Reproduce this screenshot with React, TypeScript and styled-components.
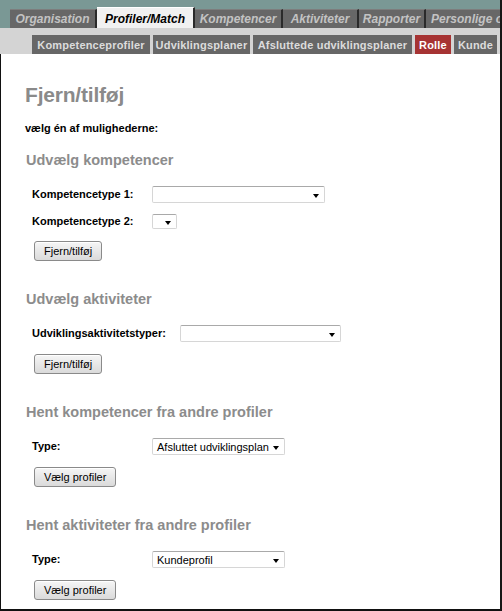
import React from "react";
import styled, { createGlobalStyle } from "styled-components";

const GlobalStyle = createGlobalStyle`
  html, body { margin: 0; padding: 0; background: #ffffff; }
  body { font-family: "Liberation Sans", Arial, sans-serif; }
  * { box-sizing: border-box; }
`;

const Page = styled.div`
  width: 502px;
  height: 611px;
  display: flex;
  flex-direction: column;
  overflow: hidden;
  border-right: 2px solid #161616;
  background: #ffffff;
  font-family: "Liberation Sans", Arial, sans-serif;
`;

const TopNav = styled.nav`
  display: flex;
  align-items: flex-end;
  height: 28px;
  padding-left: 10px;
  background: #7a9895;
  flex-shrink: 0;
`;

const MainTab = styled.div<{ $w: number; $active?: boolean }>`
  flex: 0 0 ${(p) => p.$w}px;
  height: ${(p) => (p.$active ? 21 : 19)}px;
  display: flex;
  align-items: center;
  justify-content: center;
  white-space: nowrap;
  overflow: hidden;
  background: ${(p) => (p.$active ? "#f1f1f1" : "#676767")};
  color: ${(p) => (p.$active ? "#000000" : "#c3c3c3")};
  border-right: 2px solid #2a2a2a;
  border-top: 1px solid ${(p) => (p.$active ? "#ffffff" : "#7d7d7d")};
  font-size: 12px;
  font-weight: bold;
  font-style: italic;
  padding-top: ${(p) => (p.$active ? 1 : 0)}px;
`;

const EdgeTab = styled(MainTab)`
  justify-content: flex-start;
  padding-left: 5px;
  border-right: none;
`;

const SubNav = styled.nav`
  display: flex;
  align-items: flex-end;
  height: 26px;
  padding-left: 32px;
  gap: 3px;
  background: #d4d4d4;
  flex-shrink: 0;
`;

const SubTab = styled.div<{ $w: number; $active?: boolean }>`
  flex: 0 0 ${(p) => p.$w}px;
  height: 19px;
  display: flex;
  align-items: center;
  justify-content: center;
  white-space: nowrap;
  background: ${(p) => (p.$active ? "#a63333" : "#676767")};
  color: ${(p) => (p.$active ? "#ffffff" : "#dcdcdc")};
  font-size: 11px;
  font-weight: bold;
  letter-spacing: 0.2px;
`;

const Content = styled.main`
  flex: 1;
  border-left: 1px solid #111111;
  border-bottom: 2px solid #111111;
  padding: 29px 0 0 24px;
  display: flex;
  flex-direction: column;
`;

const Title = styled.h1`
  margin: 0;
  font-size: 21px;
  line-height: 24px;
  font-weight: bold;
  color: #8a8a8a;
  letter-spacing: -0.2px;
`;

const Intro = styled.p`
  margin: 15px 0 0 0;
  font-size: 11px;
  line-height: 13px;
  font-weight: bold;
  color: #000000;
`;

const Sections = styled.div`
  display: flex;
  flex-direction: column;
  gap: 30px;
  margin-top: 17px;
`;

const Section = styled.section`
  display: flex;
  flex-direction: column;
  align-items: flex-start;
`;

const SectionTitle = styled.h2`
  margin: 0 0 17px 1px;
  font-size: 14.5px;
  line-height: 17px;
  font-weight: bold;
  color: #8c8c8c;
`;

const Fields = styled.div`
  display: flex;
  flex-direction: column;
  gap: 11px;
  margin-left: 7px;
`;

const FieldRow = styled.div`
  display: flex;
  align-items: center;
`;

const Label = styled.label`
  min-width: 106px;
  padding-right: 14px;
  box-sizing: content-box;
  font-size: 11px;
  line-height: 13px;
  font-weight: bold;
  color: #000000;
  white-space: nowrap;
`;

const FakeSelect = styled.div<{ $w: number; $h?: number }>`
  width: ${(p) => p.$w}px;
  height: ${(p) => p.$h ?? 17}px;
  display: flex;
  align-items: center;
  justify-content: space-between;
  padding: 0 5px 0 4px;
  background: #ffffff;
  border: 1px solid #d6d6d6;
  border-top-color: #a9a9a9;
  border-radius: 2px;
  font-size: 11px;
  color: #000000;
  white-space: nowrap;
`;

const Arrow = styled.span`
  width: 0;
  height: 0;
  margin-top: 3px;
  margin-left: auto;
  border-left: 3.5px solid transparent;
  border-right: 3.5px solid transparent;
  border-top: 4px solid #000000;
  flex-shrink: 0;
`;

const Button = styled.button`
  margin: 12px 0 0 9px;
  height: 20px;
  padding: 0 9px;
  font-family: "Liberation Sans", Arial, sans-serif;
  font-size: 11px;
  color: #000000;
  background: linear-gradient(#f6f6f6, #dadada);
  border: 1px solid #8a8a8a;
  border-radius: 3px;
  box-shadow: inset 0 1px 0 #ffffff;
  cursor: pointer;
`;

const Dropdown = ({ w, h, value }: { w: number; h?: number; value?: string }) => (
  <FakeSelect $w={w} $h={h} role="combobox">
    {value && <span>{value}</span>}
    <Arrow />
  </FakeSelect>
);

export default function App() {
  return (
    <>
      <GlobalStyle />
      <Page>
        <TopNav>
          <MainTab $w={87}>Organisation</MainTab>
          <MainTab $w={98} $active>
            Profiler/Match
          </MainTab>
          <MainTab $w={88}>Kompetencer</MainTab>
          <MainTab $w={76}>Aktiviteter</MainTab>
          <MainTab $w={67}>Rapporter</MainTab>
          <EdgeTab $w={160}>Personlige oplysninger</EdgeTab>
        </TopNav>
        <SubNav>
          <SubTab $w={118}>Kompetenceprofiler</SubTab>
          <SubTab $w={97}>Udviklingsplaner</SubTab>
          <SubTab $w={159}>Afsluttede udviklingsplaner</SubTab>
          <SubTab $w={36} $active>
            Rolle
          </SubTab>
          <SubTab $w={43}>Kunde</SubTab>
        </SubNav>
        <Content>
          <Title>Fjern/tilføj</Title>
          <Intro>vælg én af mulighederne:</Intro>
          <Sections>
            <Section>
              <SectionTitle>Udvælg kompetencer</SectionTitle>
              <Fields>
                <FieldRow>
                  <Label>Kompetencetype 1:</Label>
                  <Dropdown w={173} />
                </FieldRow>
                <FieldRow>
                  <Label>Kompetencetype 2:</Label>
                  <Dropdown w={25} h={15} />
                </FieldRow>
              </Fields>
              <Button>Fjern/tilføj</Button>
            </Section>
            <Section>
              <SectionTitle>Udvælg aktiviteter</SectionTitle>
              <Fields>
                <FieldRow>
                  <Label>Udviklingsaktivitetstyper:</Label>
                  <Dropdown w={161} />
                </FieldRow>
              </Fields>
              <Button>Fjern/tilføj</Button>
            </Section>
            <Section>
              <SectionTitle>Hent kompetencer fra andre profiler</SectionTitle>
              <Fields>
                <FieldRow>
                  <Label>Type:</Label>
                  <Dropdown w={133} value="Afsluttet udviklingsplan" />
                </FieldRow>
              </Fields>
              <Button>Vælg profiler</Button>
            </Section>
            <Section>
              <SectionTitle>Hent aktiviteter fra andre profiler</SectionTitle>
              <Fields>
                <FieldRow>
                  <Label>Type:</Label>
                  <Dropdown w={133} value="Kundeprofil" />
                </FieldRow>
              </Fields>
              <Button>Vælg profiler</Button>
            </Section>
          </Sections>
        </Content>
      </Page>
    </>
  );
}
